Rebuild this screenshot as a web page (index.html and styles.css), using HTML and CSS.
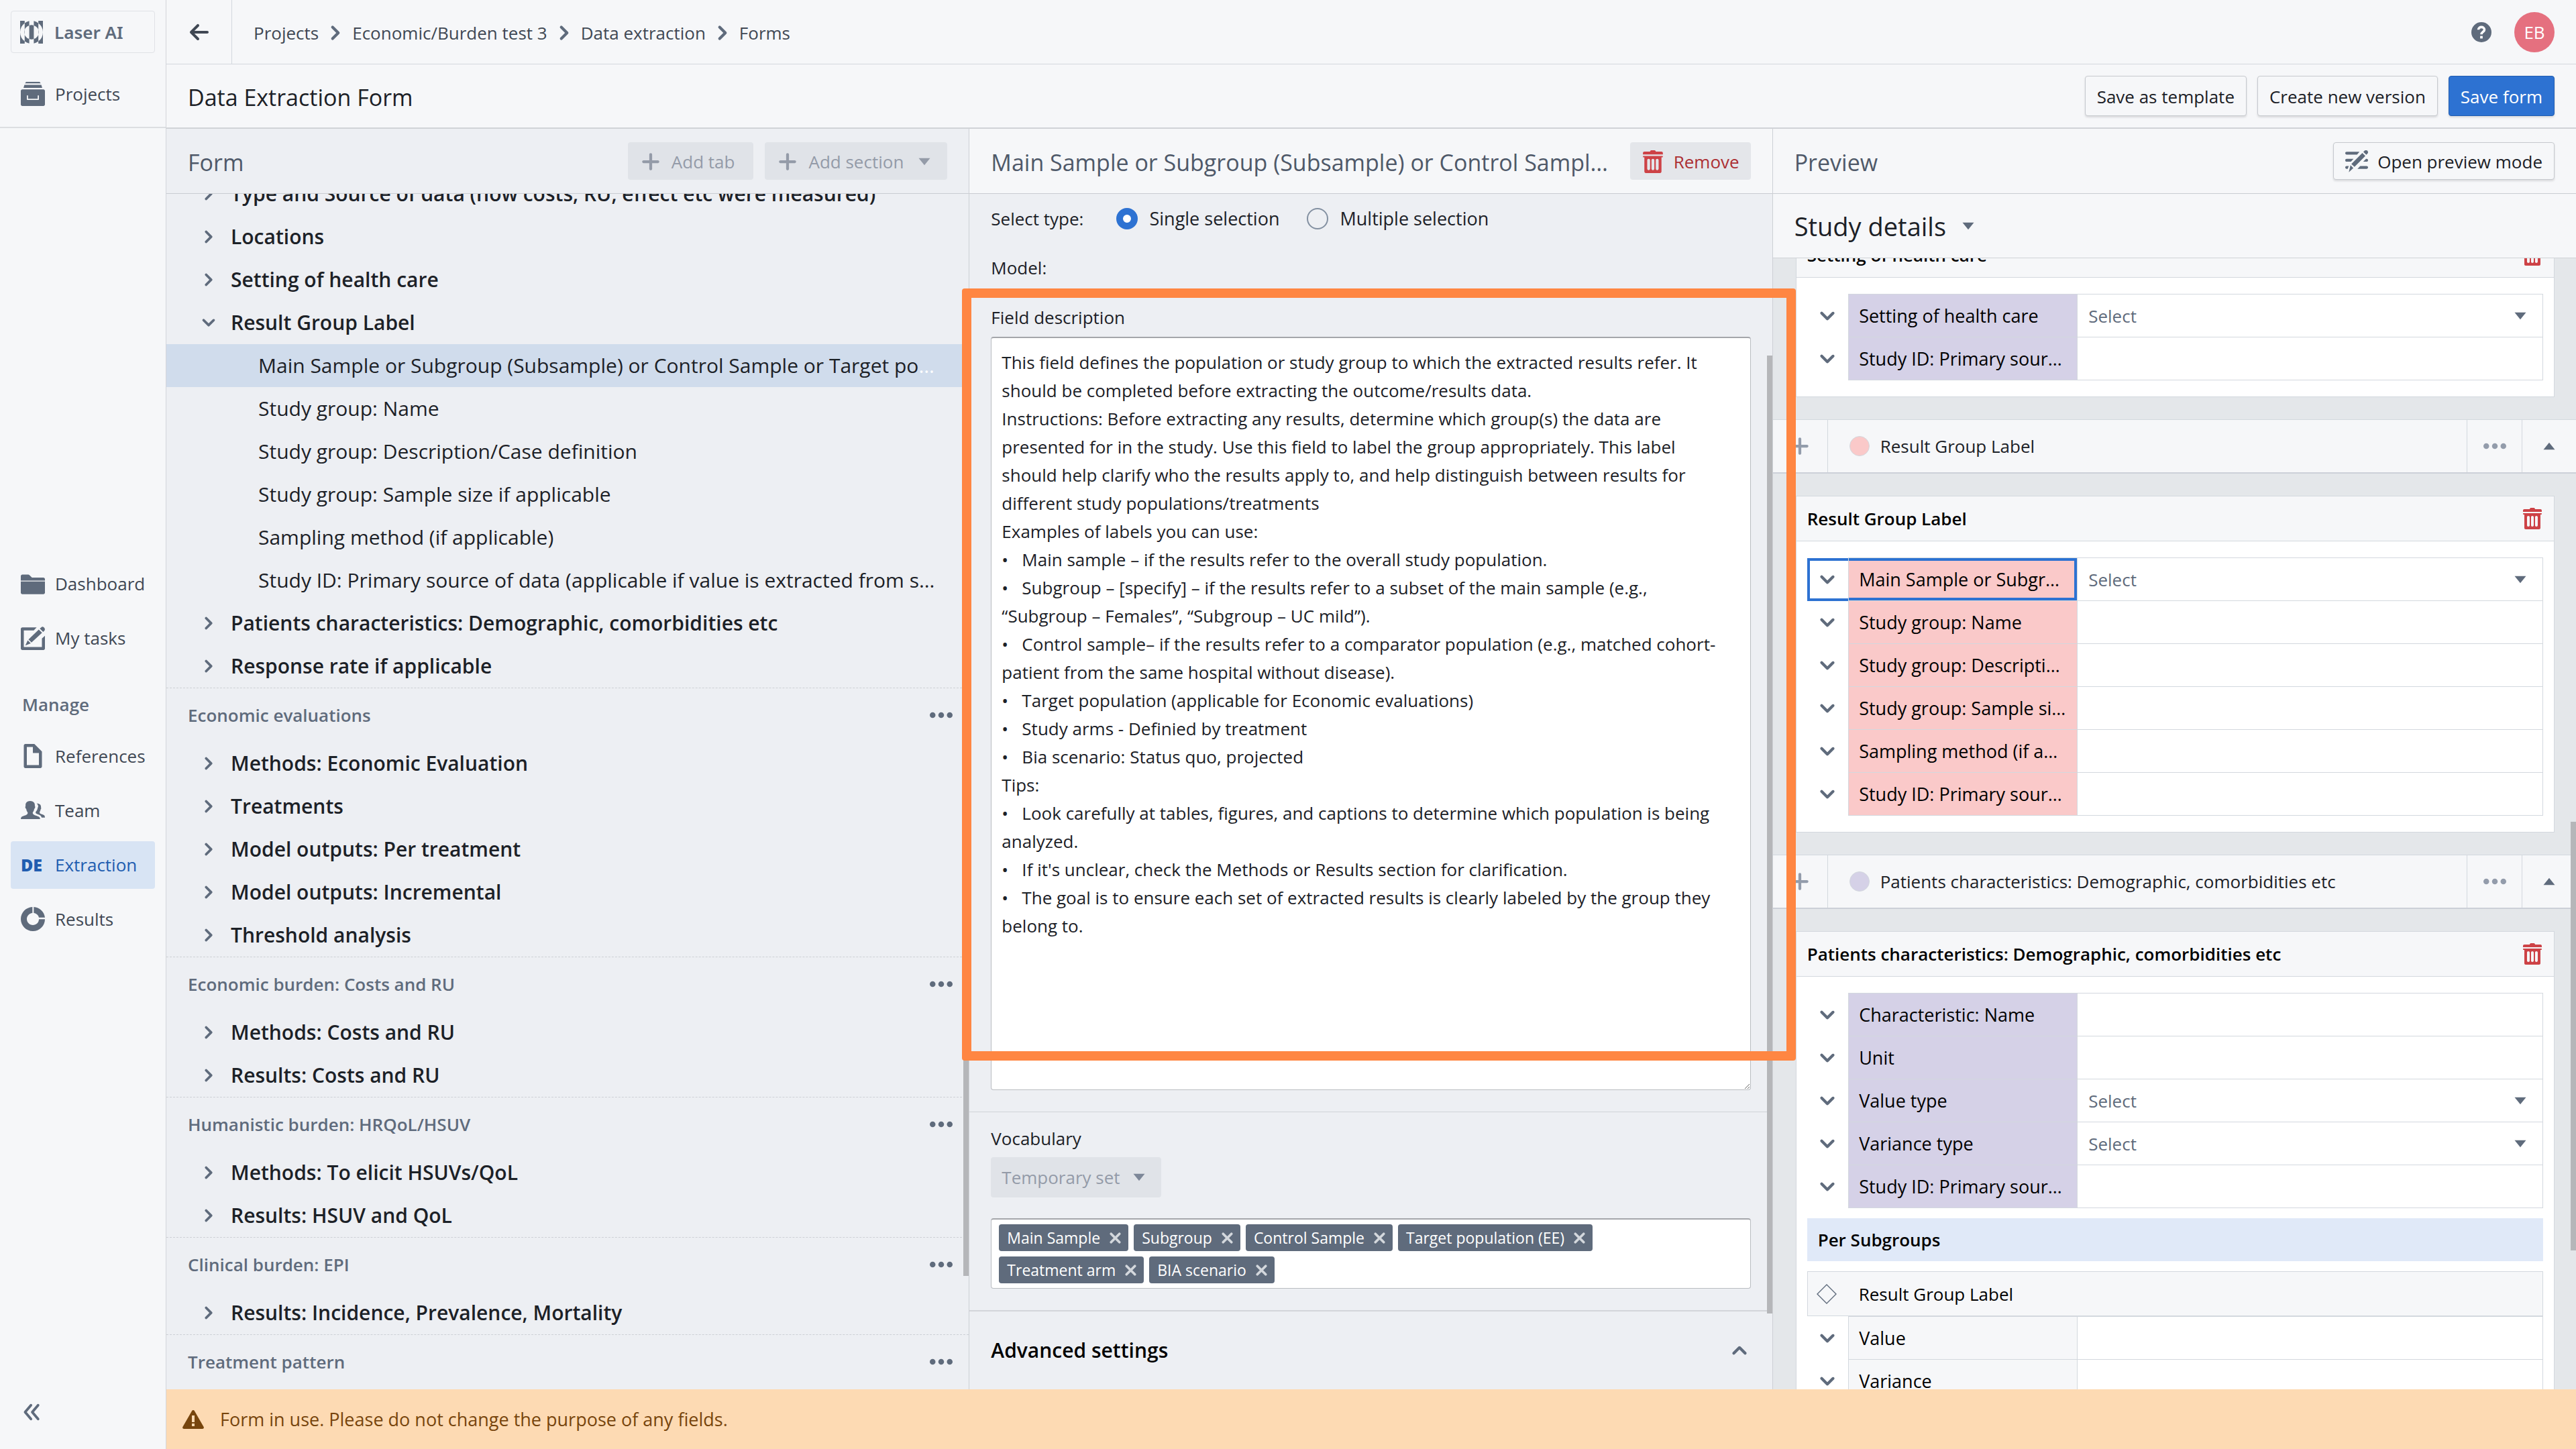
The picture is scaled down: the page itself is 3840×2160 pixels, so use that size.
FILE: index.html
```html
<!DOCTYPE html>
<html lang="en">
<head>
<meta charset="utf-8">
<meta name="viewport" content="width=device-width, initial-scale=1">
<title>Data Extraction Form</title>
<link rel="stylesheet" href="styles.css">
</head>
<body>

<!-- icon set, 16px grid -->
<svg class="sprite" aria-hidden="true">
  <symbol id="chevron-right" viewBox="0 0 16 16"><path d="M10.71 7.29l-4-4a1.003 1.003 0 00-1.42 1.42L8.59 8 5.3 11.29c-.19.18-.3.43-.3.71a1.003 1.003 0 001.71.71l4-4c.18-.18.29-.43.29-.71 0-.28-.11-.53-.29-.71z"/></symbol>
  <symbol id="chevron-down" viewBox="0 0 16 16"><path d="M12 5c-.28 0-.53.11-.71.29L8 8.59l-3.29-3.3a1.003 1.003 0 00-1.42 1.42l4 4c.18.18.43.29.71.29s.53-.11.71-.29l4-4A1.003 1.003 0 0012 5z"/></symbol>
  <symbol id="chevron-up" viewBox="0 0 16 16"><path d="M12.71 9.29l-4-4C8.53 5.11 8.28 5 8 5s-.53.11-.71.29l-4 4a1.003 1.003 0 001.42 1.42L8 7.41l3.29 3.29c.18.19.43.3.71.3a1.003 1.003 0 00.71-1.71z"/></symbol>
  <symbol id="double-left" viewBox="0 0 16 16"><path d="M7.6 3.2L3.5 8l4.1 4.8M12.6 3.2L8.5 8l4.1 4.8" fill="none" stroke="currentColor" stroke-width="1.8" stroke-linecap="round" stroke-linejoin="round"/></symbol>
  <symbol id="arrow-left" viewBox="0 0 16 16"><path d="M13.99 6.99H4.41L7.7 3.7a1.003 1.003 0 00-1.42-1.42l-5 5a1.014 1.014 0 000 1.42l5 5a1.003 1.003 0 001.42-1.42L4.41 9H14c.55 0 1-.45 1-1s-.45-1.01-1.01-1.01z"/></symbol>
  <symbol id="caret-down" viewBox="0 0 16 16"><path d="M4 5.5h8L8 10.5z"/></symbol>
  <symbol id="caret-up" viewBox="0 0 16 16"><path d="M4 10.5h8L8 5.5z"/></symbol>
  <symbol id="plus" viewBox="0 0 16 16"><path d="M13 7H9V3c0-.55-.45-1-1-1s-1 .45-1 1v4H3c-.55 0-1 .45-1 1s.45 1 1 1h4v4c0 .55.45 1 1 1s1-.45 1-1V9h4c.55 0 1-.45 1-1s-.45-1-1-1z"/></symbol>
  <symbol id="more" viewBox="0 0 16 16"><circle cx="2" cy="8" r="2"/><circle cx="8" cy="8" r="2"/><circle cx="14" cy="8" r="2"/></symbol>
  <symbol id="cross" viewBox="0 0 16 16"><path d="M4 4l8 8M12 4l-8 8" fill="none" stroke="currentColor" stroke-width="2.4" stroke-linecap="round"/></symbol>
  <symbol id="trash" viewBox="0 0 16 16"><path d="M14.49 3.99h-13c-.28 0-.5.22-.5.5s.22.5.5.5h.5v10c0 .55.45 1 1 1h10c.55 0 1-.45 1-1v-10h.5c.28 0 .5-.22.5-.5s-.22-.5-.5-.5zm-8.5 9c0 .55-.45 1-1 1s-1-.45-1-1v-6c0-.55.45-1 1-1s1 .45 1 1v6zm3 0c0 .55-.45 1-1 1s-1-.45-1-1v-6c0-.55.45-1 1-1s1 .45 1 1v6zm3 0c0 .55-.45 1-1 1s-1-.45-1-1v-6c0-.55.45-1 1-1s1 .45 1 1v6zm2-12h-4c0-.55-.45-1-1-1h-2c-.55 0-1 .45-1 1h-4c-.55 0-1 .45-1 1v1h14v-1c0-.55-.45-1-1-1z"/></symbol>
  <symbol id="logo" viewBox="0 0 32 32">
    <path d="M0 0H6.400V3.200A16 16 0 0 0 0 16zM0 32H6.400V28.800A16 16 0 0 1 0 16zM32 0H25.600V3.200A16 16 0 0 1 32 16zM32 32H25.600V28.800A16 16 0 0 0 32 16z"/>
    <path d="M6.400 3.200A16 16 0 0 1 12.800.3V6.500A10 10 0 0 0 12.800 25.500V31.700A16 16 0 0 1 6.400 28.800zM25.600 3.200A16 16 0 0 0 19.200.3V6.500A10 10 0 0 1 19.200 25.500V31.700A16 16 0 0 0 25.600 28.800z"/>
    <path d="M12.800 6.500A10 10 0 0 1 19.200 6.500V25.500A10 10 0 0 1 12.800 25.500z"/>
  </symbol>
  <symbol id="projects" viewBox="0 0 16 16"><path fill-rule="evenodd" d="M3.500 0h9l.7 1H2.800zM2.400 2h11.200l.6 2H1.800zM1 5h14c.55 0 1 .45 1 1v9c0 .55-.45 1-1 1H1c-.55 0-1-.45-1-1V6c0-.55.45-1 1-1zm3 4v2.500c0 .3.200.5.500.5h7c.3 0 .5-.2.500-.5V9h-.8v2.200H4.800V9z"/></symbol>
  <symbol id="folder" viewBox="0 0 16 16"><path d="M0 14c0 .55.45 1 1 1h14c.55 0 1-.45 1-1V6.600H0zM15 4H7.410L5.700 2.300A.965.965 0 005 2H1C.44 2 0 2.450 0 3v3h16V5c0-.55-.45-1-1-1z"/></symbol>
  <symbol id="edit" viewBox="0 0 16 16"><path d="M15.200.9c.9.800 1 1.700.3 2.400l-.7.700-2.200-2.200.8-.700c.6-.6 1.200-.7 1.800-.2zM11.900 2.400l2.200 2.200-7 6.400-2-2zM4.600 9.600l2 2L3 13zM14 13.500V8.300l2-1.800V15c0 .55-.45 1-1 1H1c-.55 0-1-.45-1-1V2c0-.55.45-1 1-1h9.500L8.600 3H2v11h12z"/></symbol>
  <symbol id="document" viewBox="0 0 16 16"><path fill-rule="evenodd" d="M9 0H3c-.55 0-1 .45-1 1v14c0 .55.45 1 1 1h10c.55 0 1-.45 1-1V5zm3 14H4V2h4v4h4z"/></symbol>
  <symbol id="people" viewBox="0 0 16 16"><path d="M12.800 13.800H0c0-1.300.6-1.700 1.900-2.100 1.500-.5 2.700-.9 2.700-2 0-.7-.8-.9-1-2.700-.4-.1-.7-.6-.6-1.300 0-.3 0-.5.200-.6C3 3.600 3.600 1.800 6.200 1.800S9.500 3.600 9.300 5.100c.2.100.2.300.2.600 0 .7-.2 1.200-.6 1.300-.2 1.800-1 2-1 2.700 0 1.100 1.300 1.500 2.700 2 1.400.5 2.200.8 2.200 2.100zM16 12.800h-2.200c-.3-1.500-1.500-1.900-3.200-2.500-.9-.4-1-.8-.4-1.700.6-.7.900-1.500 1-2.300.5-.9.400-1.500 0-2C11.200 4 11 3.500 10.500 3.500c2-.1 3 .9 2.900 2.700.2.400.1.900-.3 1.200-.1 1-.6 1.300-.6 1.900 0 .8.800 1 1.800 1.400 1.200.4 1.700.8 1.700 2.100z"/></symbol>
  <symbol id="donut" viewBox="0 0 16 16"><path d="M8.600 0v4C10.300 4.200 11.700 5.400 12 7h4c-.4-3.800-3.500-6.700-7.400-7zM12 8.100c0 2.200-1.800 3.900-4 3.900s-4-1.800-4-4c0-2 1.600-3.800 3.700-4V0C3.400.2 0 3.700 0 8c0 4.400 3.600 8 8 8s8-3.500 8-7.900z"/></symbol>
  <symbol id="help" viewBox="0 0 16 16"><circle cx="8" cy="8" r="8"/><path d="M5.600 6C5.600 3.300 10.400 3.200 10.400 6 10.400 7.600 8 7.700 8 9.700" fill="none" stroke="#fff" stroke-width="1.900"/><path d="M7 11h2v2H7z" fill="#fff"/></symbol>
  <symbol id="warning" viewBox="0 0 16 16"><path fill-rule="evenodd" d="M15.800 13.500L8.900 1.500C8.700 1.200 8.400 1 8 1s-.7.200-.9.500l-6.900 12c-.4.700.1 1.500.9 1.500h13.800c.8 0 1.300-.8.900-1.500zM9 13H7v-2h2zm0-3H7V5h2z"/></symbol>
  <symbol id="preview" viewBox="0 0 16 16"><path d="M1 1h9L8.300 3H1C.4 3 0 2.600 0 2s.4-1 1-1zM1 6h4.800L4 8H1C.4 8 0 7.600 0 7s.4-1 1-1zM14.600 6H15c.6 0 1 .4 1 1s-.4 1-1 1h-2.400zM10.500 11H15c.6 0 1 .4 1 1s-.4 1-1 1H8.600zM1 11h1.500l-.8 2H1c-.6 0-1-.4-1-1s.4-1 1-1zM15.600.4c.5.6.6 1.400 0 2l-.8.800L12.700 1.200l.8-.8c.6-.6 1.500-.6 2.100 0zM12 1.900L14.100 4l-7.600 7.700-2.200-2.100zM3.700 10.500l2 2-3.200 2.900z"/></symbol>
  <symbol id="diamond" viewBox="0 0 16 16"><path d="M8 1l7 7-7 7-7-7z" fill="none" stroke="currentColor" stroke-width=".7"/></symbol>
</svg>

<div class="app">

<aside class="sidebar">
  <div class="sidebar-top">
    <a class="brand" href="#"><svg class="icon"><use href="#logo"/></svg>Laser AI</a>
    <a class="nav-item" href="#"><svg class="icon"><use href="#projects"/></svg>Projects</a>
  </div>
  <nav class="sidebar-nav">
    <a class="nav-item" href="#"><svg class="icon"><use href="#folder"/></svg>Dashboard</a>
    <a class="nav-item" href="#"><svg class="icon"><use href="#edit"/></svg>My tasks</a>
    <div class="nav-label">Manage</div>
    <a class="nav-item" href="#"><svg class="icon"><use href="#document"/></svg>References</a>
    <a class="nav-item" href="#"><svg class="icon"><use href="#people"/></svg>Team</a>
    <a class="nav-item active" href="#"><b class="de">DE</b>Extraction</a>
    <a class="nav-item" href="#"><svg class="icon"><use href="#donut"/></svg>Results</a>
  </nav>
  <button type="button" class="collapse" aria-label="Collapse menu"><svg class="icon"><use href="#double-left"/></svg></button>
</aside>

<div class="content">

<header class="topbar">
  <button type="button" class="back" aria-label="Back"><svg class="icon"><use href="#arrow-left"/></svg></button>
  <nav class="breadcrumbs">
    <a href="#">Projects</a><svg class="icon"><use href="#chevron-right"/></svg>
    <a href="#">Economic/Burden test 3</a><svg class="icon"><use href="#chevron-right"/></svg>
    <a href="#">Data extraction</a><svg class="icon"><use href="#chevron-right"/></svg>
    <a href="#">Forms</a>
  </nav>
  <button type="button" class="help" aria-label="Help"><svg class="icon"><use href="#help"/></svg></button>
  <button type="button" class="avatar">EB</button>
</header>

<div class="titlebar">
  <h1>Data Extraction Form</h1>
  <button type="button" class="btn">Save as template</button>
  <button type="button" class="btn">Create new version</button>
  <button type="button" class="btn primary">Save form</button>
</div>

<main class="columns">

<!-- form tree -->
<section class="column form">
  <div class="column-head">
    <h2>Form</h2>
    <button type="button" class="btn disabled add-tab" disabled><svg class="icon"><use href="#plus"/></svg>Add tab</button>
    <button type="button" class="btn disabled" disabled><svg class="icon"><use href="#plus"/></svg>Add section<svg class="icon"><use href="#caret-down"/></svg></button>
  </div>
  <div class="tree-scroll">
    <ul class="tree">
      <li class="node"><svg class="icon"><use href="#chevron-right"/></svg>Type and Source of data (how costs, RU, effect etc were measured)</li>
      <li class="node"><svg class="icon"><use href="#chevron-right"/></svg>Locations</li>
      <li class="node"><svg class="icon"><use href="#chevron-right"/></svg>Setting of health care</li>
      <li class="node"><svg class="icon"><use href="#chevron-down"/></svg>Result Group Label</li>
      <li class="leaf selected"><span>Main Sample or Subgroup (Subsample) or Control Sample or Target population</span></li>
      <li class="leaf">Study group: Name</li>
      <li class="leaf">Study group: Description/Case definition</li>
      <li class="leaf">Study group: Sample size if applicable</li>
      <li class="leaf">Sampling method (if applicable)</li>
      <li class="leaf">Study ID: Primary source of data (applicable if value is extracted from study)</li>
      <li class="node"><svg class="icon"><use href="#chevron-right"/></svg>Patients characteristics: Demographic, comorbidities etc</li>
      <li class="node"><svg class="icon"><use href="#chevron-right"/></svg>Response rate if applicable</li>
      <li class="tab">Economic evaluations<button type="button" aria-label="More"><svg class="icon"><use href="#more"/></svg></button></li>
      <li class="node"><svg class="icon"><use href="#chevron-right"/></svg>Methods: Economic Evaluation</li>
      <li class="node"><svg class="icon"><use href="#chevron-right"/></svg>Treatments</li>
      <li class="node"><svg class="icon"><use href="#chevron-right"/></svg>Model outputs: Per treatment</li>
      <li class="node"><svg class="icon"><use href="#chevron-right"/></svg>Model outputs: Incremental</li>
      <li class="node"><svg class="icon"><use href="#chevron-right"/></svg>Threshold analysis</li>
      <li class="tab">Economic burden: Costs and RU<button type="button" aria-label="More"><svg class="icon"><use href="#more"/></svg></button></li>
      <li class="node"><svg class="icon"><use href="#chevron-right"/></svg>Methods: Costs and RU</li>
      <li class="node"><svg class="icon"><use href="#chevron-right"/></svg>Results: Costs and RU</li>
      <li class="tab">Humanistic burden: HRQoL/HSUV<button type="button" aria-label="More"><svg class="icon"><use href="#more"/></svg></button></li>
      <li class="node"><svg class="icon"><use href="#chevron-right"/></svg>Methods: To elicit HSUVs/QoL</li>
      <li class="node"><svg class="icon"><use href="#chevron-right"/></svg>Results: HSUV and QoL</li>
      <li class="tab">Clinical burden: EPI<button type="button" aria-label="More"><svg class="icon"><use href="#more"/></svg></button></li>
      <li class="node"><svg class="icon"><use href="#chevron-right"/></svg>Results: Incidence, Prevalence, Mortality</li>
      <li class="tab">Treatment pattern<button type="button" aria-label="More"><svg class="icon"><use href="#more"/></svg></button></li>
    </ul>
  </div>
  <div class="thumb thumb-form"></div>
</section>

<!-- field editor -->
<section class="column editor">
  <div class="column-head light">
    <h2>Main Sample or Subgroup (Subsample) or Control Sample or Target</h2>
    <button type="button" class="btn danger"><svg class="icon"><use href="#trash"/></svg>Remove</button>
  </div>
  <div class="editor-body">
    <div class="type-row">
      <span>Select type:</span>
      <label><input type="radio" name="type" checked>Single selection</label>
      <label><input type="radio" name="type">Multiple selection</label>
    </div>
    <div class="model-row">Model:</div>
    <label class="field-label" for="description">Field description</label>
    <textarea id="description" spellcheck="false">This field defines the population or study group to which the extracted results refer. It should be completed before extracting the outcome/results data.
Instructions: Before extracting any results, determine which group(s) the data are presented for in the study. Use this field to label the group appropriately. This label should help clarify who the results apply to, and help distinguish between results for different study populations/treatments
Examples of labels you can use:
•   Main sample – if the results refer to the overall study population.
•   Subgroup – [specify] – if the results refer to a subset of the main sample (e.g., “Subgroup – Females”, “Subgroup – UC mild”).
•   Control sample– if the results refer to a comparator population (e.g., matched cohort-patient from the same hospital without disease).
•   Target population (applicable for Economic evaluations)
•   Study arms - Definied by treatment
•   Bia scenario: Status quo, projected
Tips:
•   Look carefully at tables, figures, and captions to determine which population is being analyzed.
•   If it's unclear, check the Methods or Results section for clarification.
•   The goal is to ensure each set of extracted results is clearly labeled by the group they belong to.</textarea>
  </div>
  <div class="vocabulary">
    <label class="field-label" for="vocabulary">Vocabulary</label>
    <div class="select disabled">
      <select id="vocabulary" disabled><option>Temporary set</option></select>
      <svg class="icon"><use href="#caret-down"/></svg>
    </div>
    <div class="tags">
      <span class="tag">Main Sample<button type="button" aria-label="Remove tag"><svg class="icon"><use href="#cross"/></svg></button></span>
      <span class="tag">Subgroup<button type="button" aria-label="Remove tag"><svg class="icon"><use href="#cross"/></svg></button></span>
      <span class="tag">Control Sample<button type="button" aria-label="Remove tag"><svg class="icon"><use href="#cross"/></svg></button></span>
      <span class="tag">Target population (EE)<button type="button" aria-label="Remove tag"><svg class="icon"><use href="#cross"/></svg></button></span>
      <span class="tag">Treatment arm<button type="button" aria-label="Remove tag"><svg class="icon"><use href="#cross"/></svg></button></span>
      <span class="tag">BIA scenario<button type="button" aria-label="Remove tag"><svg class="icon"><use href="#cross"/></svg></button></span>
    </div>
  </div>
  <button type="button" class="advanced">Advanced settings<svg class="icon"><use href="#chevron-up"/></svg></button>
  <div class="thumb thumb-editor"></div>
  <div class="highlight"></div>
</section>

<!-- preview -->
<section class="column preview">
  <div class="column-head light">
    <h2>Preview</h2>
    <button type="button" class="btn"><svg class="icon"><use href="#preview"/></svg>Open preview mode</button>
  </div>
  <button type="button" class="page-select">Study details<svg class="icon"><use href="#caret-down"/></svg></button>
  <div class="preview-scroll">
    <div class="preview-list">

    <div class="card">
      <div class="card-head"><h3>Setting of health care</h3><button type="button" aria-label="Delete"><svg class="icon"><use href="#trash"/></svg></button></div>
      <table class="fields lilac">
        <tr><td class="toggle"><svg class="icon"><use href="#chevron-down"/></svg></td><th><label for="f1">Setting of health care</label></th><td class="value"><div class="select"><select id="f1"><option>Select</option></select><svg class="icon"><use href="#caret-down"/></svg></div></td></tr>
        <tr><td class="toggle"><svg class="icon"><use href="#chevron-down"/></svg></td><th><label for="f2">Study ID: Primary source of data</label></th><td class="value"><input type="text" id="f2"></td></tr>
      </table>
    </div>

    <div class="strip">
      <button type="button" aria-label="Add"><svg class="icon"><use href="#plus"/></svg></button>
      <div class="strip-title"><i class="dot pink"></i>Result Group Label</div>
      <button type="button" aria-label="More"><svg class="icon"><use href="#more"/></svg></button>
      <button type="button" class="fold" aria-label="Fold"><svg class="icon"><use href="#caret-up"/></svg></button>
    </div>

    <div class="card">
      <div class="card-head"><h3>Result Group Label</h3><button type="button" aria-label="Delete"><svg class="icon"><use href="#trash"/></svg></button></div>
      <table class="fields pink">
        <tr class="current"><td class="toggle"><svg class="icon"><use href="#chevron-down"/></svg></td><th><label for="f3">Main Sample or Subgroup (Subsample)</label></th><td class="value"><div class="select"><select id="f3"><option>Select</option></select><svg class="icon"><use href="#caret-down"/></svg></div></td></tr>
        <tr><td class="toggle"><svg class="icon"><use href="#chevron-down"/></svg></td><th><label for="f4">Study group: Name</label></th><td class="value"><input type="text" id="f4"></td></tr>
        <tr><td class="toggle"><svg class="icon"><use href="#chevron-down"/></svg></td><th><label for="f5">Study group: Description/Case definition</label></th><td class="value"><input type="text" id="f5"></td></tr>
        <tr><td class="toggle"><svg class="icon"><use href="#chevron-down"/></svg></td><th><label for="f6">Study group: Sample size if applicable</label></th><td class="value"><input type="text" id="f6"></td></tr>
        <tr><td class="toggle"><svg class="icon"><use href="#chevron-down"/></svg></td><th><label for="f7">Sampling method (if applicable)</label></th><td class="value"><input type="text" id="f7"></td></tr>
        <tr><td class="toggle"><svg class="icon"><use href="#chevron-down"/></svg></td><th><label for="f8">Study ID: Primary source of data</label></th><td class="value"><input type="text" id="f8"></td></tr>
      </table>
    </div>

    <div class="strip">
      <button type="button" aria-label="Add"><svg class="icon"><use href="#plus"/></svg></button>
      <div class="strip-title"><i class="dot lilac"></i>Patients characteristics: Demographic, comorbidities etc</div>
      <button type="button" aria-label="More"><svg class="icon"><use href="#more"/></svg></button>
      <button type="button" class="fold" aria-label="Fold"><svg class="icon"><use href="#caret-up"/></svg></button>
    </div>

    <div class="card">
      <div class="card-head"><h3>Patients characteristics: Demographic, comorbidities etc</h3><button type="button" aria-label="Delete"><svg class="icon"><use href="#trash"/></svg></button></div>
      <table class="fields lilac">
        <tr><td class="toggle"><svg class="icon"><use href="#chevron-down"/></svg></td><th><label for="f9">Characteristic: Name</label></th><td class="value"><input type="text" id="f9"></td></tr>
        <tr><td class="toggle"><svg class="icon"><use href="#chevron-down"/></svg></td><th><label for="f10">Unit</label></th><td class="value"><input type="text" id="f10"></td></tr>
        <tr><td class="toggle"><svg class="icon"><use href="#chevron-down"/></svg></td><th><label for="f11">Value type</label></th><td class="value"><div class="select"><select id="f11"><option>Select</option></select><svg class="icon"><use href="#caret-down"/></svg></div></td></tr>
        <tr><td class="toggle"><svg class="icon"><use href="#chevron-down"/></svg></td><th><label for="f12">Variance type</label></th><td class="value"><div class="select"><select id="f12"><option>Select</option></select><svg class="icon"><use href="#caret-down"/></svg></div></td></tr>
        <tr><td class="toggle"><svg class="icon"><use href="#chevron-down"/></svg></td><th><label for="f13">Study ID: Primary source of data</label></th><td class="value"><input type="text" id="f13"></td></tr>
      </table>
      <h4 class="subgroups">Per Subgroups</h4>
      <div class="group-row"><svg class="icon"><use href="#diamond"/></svg>Result Group Label</div>
      <table class="fields plain">
        <tr><td class="toggle"><svg class="icon"><use href="#chevron-down"/></svg></td><th><label for="f14">Value</label></th><td class="value"><input type="text" id="f14"></td></tr>
        <tr><td class="toggle"><svg class="icon"><use href="#chevron-down"/></svg></td><th><label for="f15">Variance</label></th><td class="value"><input type="text" id="f15"></td></tr>
      </table>
    </div>

    </div>
  </div>
  <div class="thumb thumb-preview"></div>
</section>

</main>

<footer class="notice"><svg class="icon"><use href="#warning"/></svg>Form in use. Please do not change the purpose of any fields.</footer>

</div>
</div>

</body>
</html>
```
FILE: styles.css
```css
* {
  box-sizing: border-box;
}

body {
  margin: 0;
  font-family: "Open Sans", "Noto Sans", sans-serif;
  font-size: 26px;
  line-height: 42px;
  color: #1c2127;
  background: #f6f7f9;
}

h1, h2, h3, h4, ul {
  margin: 0;
  padding: 0;
  font-weight: 400;
}

a {
  color: inherit;
  text-decoration: none;
}

button, input, select, textarea {
  margin: 0;
  font: inherit;
  color: inherit;
}

button {
  padding: 0;
  border: none;
  background: none;
  cursor: pointer;
}

.sprite {
  display: none;
}

.icon {
  width: 34px;
  height: 34px;
  flex: none;
  fill: currentColor;
  color: #5f6b7c;
}

.app {
  display: flex;
  height: 100vh;
  overflow: hidden;
}

/* Sidebar */
.sidebar {
  width: 248px;
  flex: none;
  display: flex;
  flex-direction: column;
  border-right: 1px solid #d3d5da;
  color: #404854;
}

.sidebar-top {
  height: 191px;
  padding: 16px;
  border-bottom: 2px solid #dcdee1;
}

.brand {
  display: flex;
  align-items: center;
  gap: 17px;
  height: 63px;
  padding-left: 13px;
  border: 1px solid #e0e2e6;
  border-radius: 4px;
  font-family: "Noto Sans", sans-serif;
  font-weight: 600;
  color: #5f6b7c;
}

.sidebar-top .nav-item {
  height: 72px;
  margin-top: 25px;
}

.sidebar-nav {
  flex: 1;
  display: flex;
  flex-direction: column;
  justify-content: center;
  gap: 10px;
  padding: 0 16px;
}

.nav-item {
  display: flex;
  align-items: center;
  gap: 15px;
  height: 71px;
  padding-left: 15px;
  border-radius: 4px;
}

.nav-item .icon {
  width: 36px;
  height: 36px;
}

.nav-item.active {
  background: #d8e4f4;
  color: #215db0;
}

.de {
  width: 36px;
  font-size: 25px;
  font-weight: 800;
}

.nav-label {
  height: 85px;
  padding: 32px 17px 0;
  font-weight: 600;
  color: #5f6b7c;
}

.collapse {
  display: flex;
  align-items: center;
  height: 111px;
  padding-left: 30px;
}

/* Top bars */
.content {
  flex: 1;
  min-width: 0;
  display: flex;
  flex-direction: column;
}

.topbar {
  display: flex;
  align-items: center;
  height: 96px;
  padding-right: 32px;
  border-bottom: 1px solid #d3d8de;
}

.back {
  display: flex;
  align-items: center;
  justify-content: center;
  width: 98px;
  height: 95px;
  border-right: 1px solid #d3d8de;
}

.back .icon {
  width: 32px;
  height: 32px;
  color: #404854;
}

.breadcrumbs {
  flex: 1;
  display: flex;
  align-items: center;
  gap: 8px;
  padding: 2px 0 0 32px;
  color: #404854;
}

.help {
  display: flex;
}

.help .icon {
  width: 30px;
  height: 30px;
}

.avatar {
  width: 60px;
  height: 60px;
  margin-left: 34px;
  border-radius: 50%;
  background: #e5707f;
  color: #fff;
}

.titlebar {
  display: flex;
  align-items: center;
  gap: 16px;
  height: 96px;
  padding: 0 32px;
  border-bottom: 2px solid #d0d3d7;
}

h1, h2 {
  flex: 1;
  min-width: 0;
  padding: 4px 0 0;
  font-size: 34px;
  line-height: 52px;
  white-space: nowrap;
  overflow: hidden;
  text-overflow: ellipsis;
}

.btn {
  display: flex;
  align-items: center;
  gap: 14px;
  height: 60px;
  padding: 2px 17px 0;
  border: 1px solid #c6c9ce;
  border-radius: 4px;
  background: #f6f7f9;
  box-shadow: 0 2px 3px rgba(17, 20, 24, .12);
  white-space: nowrap;
}

.btn.primary {
  border-color: #215db0;
  background: #2d72d2;
  color: #fff;
}

.btn.disabled {
  border: none;
  background: #e0e3e8;
  box-shadow: none;
  color: #949ba8;
}

.btn.disabled .icon {
  color: #949ba8;
}

.btn.add-tab {
  padding-right: 28px;
}

.btn.danger {
  border: none;
  background: #e4e6ea;
  box-shadow: none;
  color: #ac2f33;
}

.btn.danger .icon {
  color: #cd4246;
}

/* Columns */
.columns {
  flex: 1;
  min-height: 0;
  display: grid;
  grid-template-columns: repeat(3, minmax(0, 1fr));
}

.column {
  position: relative;
  min-height: 0;
  display: flex;
  flex-direction: column;
  border-right: 1px solid #cdd0d5;
  background: #edeff3;
}

.preview {
  border-right: none;
  background: #e4e7ea;
}

.column-head {
  flex: none;
  display: flex;
  align-items: center;
  gap: 17px;
  height: 97px;
  padding: 0 32px;
  border-bottom: 1px solid #c9ccd1;
}

.column-head.light {
  background: #f6f7f9;
}

.column-head h2 {
  color: #4f5969;
}

.editor .column-head {
  gap: 24px;
}

.column-head .btn {
  height: 56px;
}

/* scrollbars are drawn over the content */
.thumb {
  position: absolute;
  right: 0;
  width: 8px;
  background: #b5b6b9;
}

.thumb-form {
  top: 65%;
  bottom: 9%;
}

.thumb-editor {
  top: 18%;
  bottom: 6%;
}

.thumb-preview {
  top: 55%;
  bottom: 11%;
}

/* Tree */
.tree-scroll {
  flex: 1;
  min-height: 0;
  overflow: hidden;
}

.tree {
  margin-top: -32px;
  list-style: none;
  font-size: 30px;
}

.node {
  display: flex;
  align-items: center;
  gap: 18px;
  height: 64px;
  padding-left: 48px;
  font-weight: 600;
  white-space: nowrap;
}

.node .icon {
  width: 30px;
  height: 30px;
}

.leaf {
  height: 64px;
  line-height: 64px;
  padding: 0 42px 0 137px;
  white-space: nowrap;
  overflow: hidden;
  text-overflow: ellipsis;
}

.leaf.selected {
  background: #d0dcec;
  color: #fff;
}

.leaf.selected span {
  color: #1c2127;
}

.tab {
  display: flex;
  align-items: center;
  justify-content: space-between;
  height: 81px;
  padding: 0 24px 0 32px;
  border-top: 1px dashed #cdd0d5;
  font-size: 26px;
  font-weight: 600;
  color: #5f6b7c;
}

.tab button {
  display: flex;
}

/* Editor */
.editor-body {
  padding: 0 32px 32px;
}

.type-row {
  display: flex;
  align-items: center;
  height: 73px;
}

.type-row label {
  display: flex;
  align-items: center;
  gap: 17px;
  margin-left: 41px;
  font-size: 27px;
}

.type-row span {
  padding-right: 8px;
}

input[type="radio"] {
  appearance: none;
  width: 32px;
  height: 32px;
  border: 2px solid #8390a1;
  border-radius: 50%;
}

input[type="radio"]:checked {
  border: 10px solid #2d72d2;
  background: #fff;
}

.model-row {
  height: 74px;
  line-height: 74px;
}

.field-label {
  display: block;
}

.editor-body .field-label {
  height: 66px;
  padding-top: 16px;
}

textarea {
  display: block;
  width: 100%;
  height: 1123px;
  padding: 15px 24px 15px 15px;
  border: 1px solid #b9bcc1;
  border-top: 2px solid #a4a6aa;
  border-radius: 4px;
  background: #fff;
  outline: none;
}

.vocabulary {
  padding: 18px 32px 32px;
  border-top: 1px solid #d0d3d7;
}

.select {
  position: relative;
  display: flex;
  align-items: center;
}

.select select {
  width: 100%;
  height: 60px;
  padding: 0 16px;
  border: none;
  border-radius: 4px;
  background: none;
  appearance: none;
  color: #5f6b7c;
  opacity: 1;
}

.select .icon {
  position: absolute;
  right: 16px;
  pointer-events: none;
}

.vocabulary .select {
  width: 254px;
  margin: 7px 0 31px;
}

.select.disabled select {
  background: #e0e3e8;
  color: #949ba8;
}

.select.disabled .icon {
  color: #7d8798;
}

.tags {
  display: flex;
  flex-wrap: wrap;
  gap: 8px;
  padding: 7px 220px 7px 11px;
  border: 1px solid #b9bcc1;
  border-top: 2px solid #a4a6aa;
  border-radius: 4px;
  background: #fff;
}

.tag {
  display: flex;
  align-items: center;
  gap: 10px;
  height: 40px;
  padding: 0 7px 0 12px;
  border-radius: 4px;
  background: #5f6b7c;
  color: #fff;
  font-size: 23px;
}

.tag button {
  display: flex;
}

.tag .icon {
  width: 25px;
  height: 25px;
  color: #d3d7dc;
}

.advanced {
  display: flex;
  align-items: center;
  justify-content: space-between;
  height: 117px;
  padding: 0 32px;
  border-top: 2px solid #d3d5da;
  font-size: 30px;
  font-weight: 600;
  color: #000;
}

/* frame round the description field */
.highlight {
  position: absolute;
  top: 238px;
  left: -11px;
  right: -35px;
  height: 1151px;
  border: 14px solid #ff8642;
  border-radius: 4px;
  pointer-events: none;
  z-index: 2;
}

/* Preview */
.page-select {
  flex: none;
  display: flex;
  align-items: center;
  gap: 16px;
  height: 96px;
  padding: 0 32px;
  border-bottom: 1px solid #d0d3d7;
  background: #f6f7f9;
  font-size: 38px;
}

.preview-scroll {
  flex: 1;
  min-height: 0;
  overflow: hidden;
}

.preview-list {
  display: flex;
  flex-direction: column;
  gap: 33px;
  margin-top: -39px;
}

.card {
  margin: 0 32px 0 34px;
  padding-bottom: 24px;
  border: 1px solid #d3d8de;
  background: #fff;
  color: #000;
}

.card-head {
  display: flex;
  align-items: center;
  justify-content: space-between;
  height: 67px;
  margin-bottom: 24px;
  padding: 0 16px;
  border-bottom: 1px solid #d3d8de;
  background: #f6f7f9;
}

.card-head button {
  display: flex;
}

.card-head .icon {
  width: 32px;
  height: 32px;
  color: #cd4246;
}

h3, h4 {
  font-size: 26px;
  font-weight: 600;
}

.fields {
  width: calc(100% - 32px);
  margin: 0 16px;
  border-collapse: collapse;
  table-layout: fixed;
}

.fields tr {
  height: 64px;
}

.fields td,
.fields th {
  padding: 0;
}

.fields .toggle {
  width: 62px;
  line-height: 0;
  text-align: center;
}

.fields th {
  width: 341px;
  border: 1px solid #d3d8de;
  font-size: 27px;
  font-weight: 400;
  text-align: left;
}

.fields th label {
  display: block;
  padding: 0 15px;
  white-space: nowrap;
  overflow: hidden;
  text-overflow: ellipsis;
}

.fields.lilac th, .dot.lilac { background: #d5d1e7; }
.fields.pink th, .dot.pink { background: #fac9c9; }
.fields.plain th { background: #f6f7f9; }

.fields .value {
  border: 1px solid #d3d8de;
}

.fields input {
  display: block;
  width: 100%;
  height: 62px;
  padding: 0 16px;
  border: none;
  background: none;
  outline: none;
}

.fields .current .toggle {
  box-shadow: inset 4px 0 #2d72d2, inset 0 4px #2d72d2, inset 0 -4px #2d72d2;
}

.fields .current th {
  box-shadow: inset -4px 0 #2d72d2, inset 0 4px #2d72d2, inset 0 -4px #2d72d2;
}

.strip {
  display: flex;
  height: 81px;
  border-top: 1px solid #d3d8de;
  border-bottom: 2px solid #ccd0d8;
  background: #f6f7f9;
}

.strip button {
  display: flex;
  align-items: center;
  justify-content: center;
  width: 81px;
}

.strip button .icon {
  color: #939cab;
}

.strip .fold {
  border-left: 1px solid #d3d8de;
}

.strip .fold .icon {
  color: #5f6b7c;
}

.strip-title {
  flex: 1;
  display: flex;
  align-items: center;
  gap: 16px;
  padding-left: 32px;
  border-left: 1px solid #d3d8de;
  border-right: 1px solid #d3d8de;
}

.dot {
  width: 30px;
  height: 30px;
  border: 1px solid #d3d8de;
  border-radius: 50%;
}

.subgroups {
  height: 64px;
  margin: 15px 16px;
  padding: 0 16px;
  line-height: 64px;
  background: #e0e9f8;
}

.group-row {
  display: flex;
  align-items: center;
  gap: 32px;
  height: 67px;
  margin: 0 16px;
  padding-left: 12px;
  border: 1px solid #d3d8de;
  background: #f6f7f9;
}

.group-row .icon {
  width: 32px;
  height: 32px;
}

/* Notice */
.notice {
  flex: none;
  display: flex;
  align-items: center;
  gap: 24px;
  height: 89px;
  padding-left: 24px;
  background: #fddab3;
  color: #77450d;
  font-size: 27px;
}

.notice .icon {
  width: 32px;
  height: 32px;
  color: #77450d;
}
```
